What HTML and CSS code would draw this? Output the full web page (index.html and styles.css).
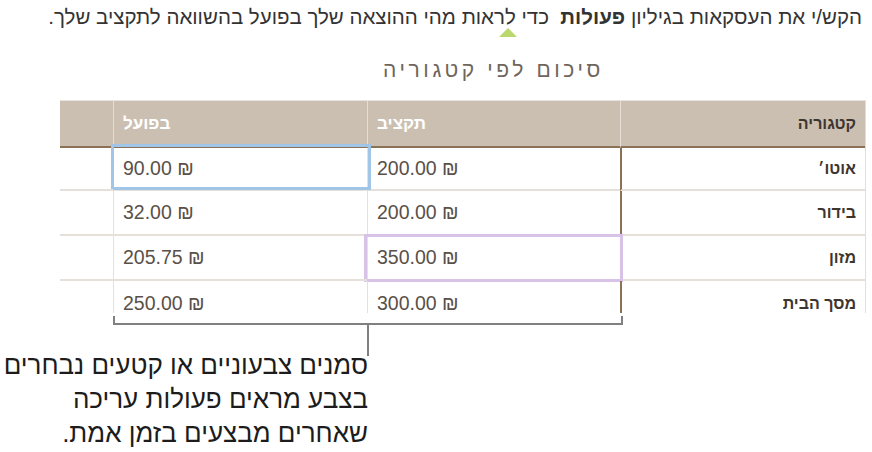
FILE: index.html
```html
<!DOCTYPE html>
<html lang="he">
<head>
<meta charset="utf-8">
<link rel="stylesheet" href="styles.css">
</head>
<body>
<div class="page">
  <p class="intro">הקש/י את העסקאות בגיליון <b>פעולות</b>&nbsp; כדי לראות מהי ההוצאה שלך בפועל בהשוואה לתקציב שלך.</p>
  <div class="pointer"></div>
  <h1 class="title">סיכום לפי קטגוריה</h1>
  <div class="table-wrap">
    <div class="grid">
      <div class="cell head cat">קטגוריה</div>
      <div class="cell head">תקציב</div>
      <div class="cell head">בפועל</div>
      <div class="cell head blank"></div>

      <div class="cell cat r1">אוטו׳</div>
      <div class="cell val r1 split"><span class="num">200.00 ₪</span></div>
      <div class="cell val r1 sel-blue"><span class="num">90.00 ₪</span></div>
      <div class="cell blank r1"></div>

      <div class="cell cat">בידור</div>
      <div class="cell val split"><span class="num">200.00 ₪</span></div>
      <div class="cell val"><span class="num">32.00 ₪</span></div>
      <div class="cell blank"></div>

      <div class="cell cat">מזון</div>
      <div class="cell val split sel-purple"><span class="num">350.00 ₪</span></div>
      <div class="cell val"><span class="num">205.75 ₪</span></div>
      <div class="cell blank"></div>

      <div class="cell cat last">מסך הבית</div>
      <div class="cell val split last"><span class="num">300.00 ₪</span></div>
      <div class="cell val last"><span class="num">250.00 ₪</span></div>
      <div class="cell blank last"></div>
    </div>
  </div>
  <div class="bracket"></div>
  <div class="stem"></div>
  <p class="callout">סמנים צבעוניים או קטעים נבחרים<br>בצבע מראים פעולות עריכה<br>שאחרים מבצעים בזמן אמת.</p>
</div>
</body>
</html>
```
FILE: styles.css
```css
html, body {
  margin: 0;
  padding: 0;
  background: #ffffff;
}
body {
  width: 872px;
  height: 452px;
  overflow: hidden;
  font-family: "Liberation Sans", Arial, sans-serif;
}
.page {
  position: relative;
  width: 872px;
  height: 452px;
}
.intro {
  margin: 0;
  padding: 5px 10px 0 0;
  direction: rtl;
  text-align: right;
  font-size: 20.5px;
  line-height: 24px;
  color: #333333;
  white-space: nowrap;
}
.intro b {
  font-weight: bold;
}
.pointer {
  width: 0;
  height: 0;
  margin: -1px 0 0 499px;
  border-left: 9px solid transparent;
  border-right: 9px solid transparent;
  border-bottom: 9px solid #b9d96c;
}
.title {
  margin: 21px 0 0 0;
  padding-left: 383px;
  direction: rtl;
  text-align: left;
  font-weight: normal;
  font-size: 21px;
  line-height: 24px;
  letter-spacing: 3.6px;
  color: #6e655c;
  width: 240px;
  white-space: nowrap;
}
.table-wrap {
  margin: 18px 0 0 60px;
  width: 806px;
  height: 213px;
  overflow: hidden;
}
.grid {
  direction: rtl;
  display: grid;
  grid-template-columns: 245px 253px 254px 54px;
  grid-template-rows: 47px 43px 45px 45px 45px;
  border-right: 1px solid #e4ded8;
  border-top: 1px solid #e8e3de;
  box-sizing: border-box;
}
.cell {
  position: relative;
  display: flex;
  align-items: center;
  box-sizing: border-box;
  border-bottom: 2px solid #e6e0da;
  border-left: 1px solid #e6e0da;
  padding: 0 9px;
}
.head {
  background: #cbbfb2;
  color: #ffffff;
  font-weight: bold;
  font-size: 17px;
  border-bottom: 2px solid #8b7257;
  border-left: 1px solid #e6ded6;
  justify-content: flex-end;
}
.head.cat {
  justify-content: flex-start;
}
.head.blank {
  border-left: none;
}
.cat {
  font-weight: bold;
  font-size: 16px;
  color: #3e362e;
  padding-right: 9px;
}
.cell.cat:not(.head) {
  border-left: 2px solid #8b7257;
}
.val {
  justify-content: flex-end;
  color: #5a5048;
  font-size: 19.5px;
}
.blank {
  border-left: none;
}
.num {
  direction: ltr;
  unicode-bidi: isolate;
}
.last {
  border-bottom: none;
}
.sel-blue::after,
.sel-purple::after {
  content: "";
  position: absolute;
  box-sizing: border-box;
  border: 3px solid;
  pointer-events: none;
}
.sel-blue::after {
  border-color: #a0c5e7;
  left: -3px;
  right: -4px;
  top: -4px;
  bottom: -1px;
}
.sel-purple::after {
  border-color: #d9c2e7;
  left: -4px;
  right: -3px;
  top: -2px;
  bottom: -3px;
}
.bracket {
  margin: 3px 0 0 113px;
  width: 510px;
  height: 9px;
  box-sizing: border-box;
  border: 2px solid #808080;
  border-top: none;
}
.stem {
  margin-left: 367px;
  width: 2px;
  height: 31px;
  background: #808080;
}
.callout {
  margin: -8px 0 0 0;
  width: 368px;
  direction: rtl;
  text-align: right;
  font-size: 26px;
  line-height: 34px;
  color: #1c1c1c;
  white-space: nowrap;
}
```
